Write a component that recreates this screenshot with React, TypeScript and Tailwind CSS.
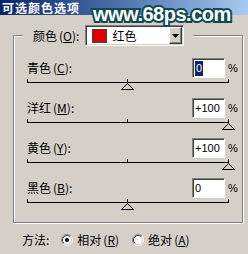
import React from "react";

const FONT = "[font-family:'Noto_Sans_CJK_SC','Noto_Sans',sans-serif]";

function Slider({ pos }: { pos: number }) {
  return (
    <svg width="212" height="20" className="block ml-[13px]" shapeRendering="crispEdges">
      <rect x="0" y="4" width="202" height="1" fill="#000" />
      <rect x="0" y="1" width="1" height="3" fill="#000" />
      <rect x="100" y="1" width="1" height="3" fill="#000" />
      <rect x="201" y="1" width="1" height="3" fill="#000" />
      <path
        d={`M${pos + 0.5} 5.5 L${pos + 6.5} 11.5 L${pos - 5.5} 11.5 Z`}
        fill="#d4d0c8"
        stroke="#000"
        shapeRendering="geometricPrecision"
      />
    </svg>
  );
}

function Row({
  name,
  k,
  value,
  pos,
  selected,
}: {
  name: string;
  k: string;
  value: string;
  pos: number;
  selected?: boolean;
}) {
  return (
    <div>
      <div className="flex items-center h-[20px] pl-[13px] pr-[6px]">
        <span className="flex-1 text-[12px] leading-[20px] text-black">
          {name}
          <span className="ml-[2px]">
            (<u>{k}</u>)
          </span>
          :
        </span>
        <div className="w-[33px] h-[20px] bg-white border border-t-[#808080] border-l-[#808080] border-b-white border-r-white shadow-[inset_1px_1px_0_#404040] flex items-center pl-[2px] text-[11px] leading-[14px] text-black [font-family:'Liberation_Sans',sans-serif]">
          {selected ? (
            <span className="bg-[#0a246a] text-white px-[1px] leading-[15px]">{value}</span>
          ) : (
            <span>{value}</span>
          )}
        </div>
        <span className="ml-[3px] w-[8px] text-[11px] leading-[20px] text-black [font-family:'Liberation_Sans',sans-serif]">
          %
        </span>
      </div>
      <Slider pos={pos} />
    </div>
  );
}

function Radio({ checked }: { checked?: boolean }) {
  const arc = (r: number) => {
    const d = r * 0.7071;
    return {
      tl: `M${6 - d} ${6 + d} A${r} ${r} 0 0 1 ${6 + d} ${6 - d}`,
      br: `M${6 + d} ${6 - d} A${r} ${r} 0 0 1 ${6 - d} ${6 + d}`,
    };
  };
  const o = arc(5.5);
  const i = arc(4.5);
  return (
    <svg width="12" height="12" className="block">
      <circle cx="6" cy="6" r="4.5" fill="#fff" />
      <path d={o.tl} fill="none" stroke="#808080" />
      <path d={o.br} fill="none" stroke="#fff" />
      <path d={i.tl} fill="none" stroke="#404040" />
      <path d={i.br} fill="none" stroke="#d4d0c8" />
      {checked && <circle cx="6" cy="6" r="2" fill="#000" />}
    </svg>
  );
}

export default function App() {
  return (
    <div className={`relative w-[248px] h-[254px] bg-[#d4d0c8] overflow-hidden ${FONT}`}>
      <div className="h-[15px] bg-linear-to-r from-[#0a246a] to-[#a6caf0] pl-[2px] text-white font-bold text-[12px] tracking-[1px] leading-[15px]">
        可选颜色选项
      </div>

      <fieldset className="mt-[10px] ml-[13px] w-[230px] p-0 border border-[#808080] shadow-[1px_1px_0_#fff,inset_1px_1px_0_#fff]">
        <legend className="ml-[9px] pl-[10px] pr-[9px] bg-[#d4d0c8] flex items-center h-[21px]">
          <span className="text-[12px] text-black leading-[21px]">
            颜色<span className="ml-[2px]">(<u>O</u>)</span>:
          </span>
          <div className="ml-[6px] w-[99px] h-[21px] bg-white border border-t-[#808080] border-l-[#808080] border-b-white border-r-white shadow-[inset_1px_1px_0_#404040,inset_-1px_-1px_0_#d4d0c8] flex items-center">
            <div className="ml-[6px] w-[15px] h-[14px] bg-[#e00000] border border-[#404040]" />
            <span className="ml-[5px] text-[12px] text-black leading-[16px]">红色</span>
            <div className="ml-auto mr-[1px] w-[13px] h-[17px] bg-[#d4d0c8] border border-t-white border-l-white border-b-[#404040] border-r-[#404040] shadow-[inset_-1px_-1px_0_#808080] flex items-center justify-center">
              <svg width="7" height="4" className="block">
                <path d="M0 0 H7 L3.5 4 Z" fill="#000" />
              </svg>
            </div>
          </div>
        </legend>
        <div className="pt-[12px] pb-[4px]">
          <Row name="青色" k="C" value="0" pos={100} selected />
          <Row name="洋红" k="M" value="+100" pos={201} />
          <Row name="黄色" k="Y" value="+100" pos={201} />
          <Row name="黑色" k="B" value="0" pos={100} />
        </div>
      </fieldset>

      <div className="flex items-center mt-[11px] h-[12px] pl-[22px] text-[12px] text-black">
        <span className="leading-[12px]">方法:</span>
        <div className="ml-[12px]">
          <Radio checked />
        </div>
        <span className="ml-[4px] leading-[12px]">
          相对<span className="ml-[2px]">(<u>R</u>)</span>
        </span>
        <div className="ml-[13px]">
          <Radio />
        </div>
        <span className="ml-[4px] leading-[12px]">
          绝对<span className="ml-[2px]">(<u>A</u>)</span>
        </span>
      </div>

      <div className="absolute left-[93px] top-[2px] text-[20px] font-bold tracking-[-0.5px] leading-[24px] text-white [font-family:'Liberation_Sans',sans-serif] [-webkit-text-stroke:4px_#0f4a52] [paint-order:stroke_fill]">
        www.68ps.com
      </div>
    </div>
  );
}
